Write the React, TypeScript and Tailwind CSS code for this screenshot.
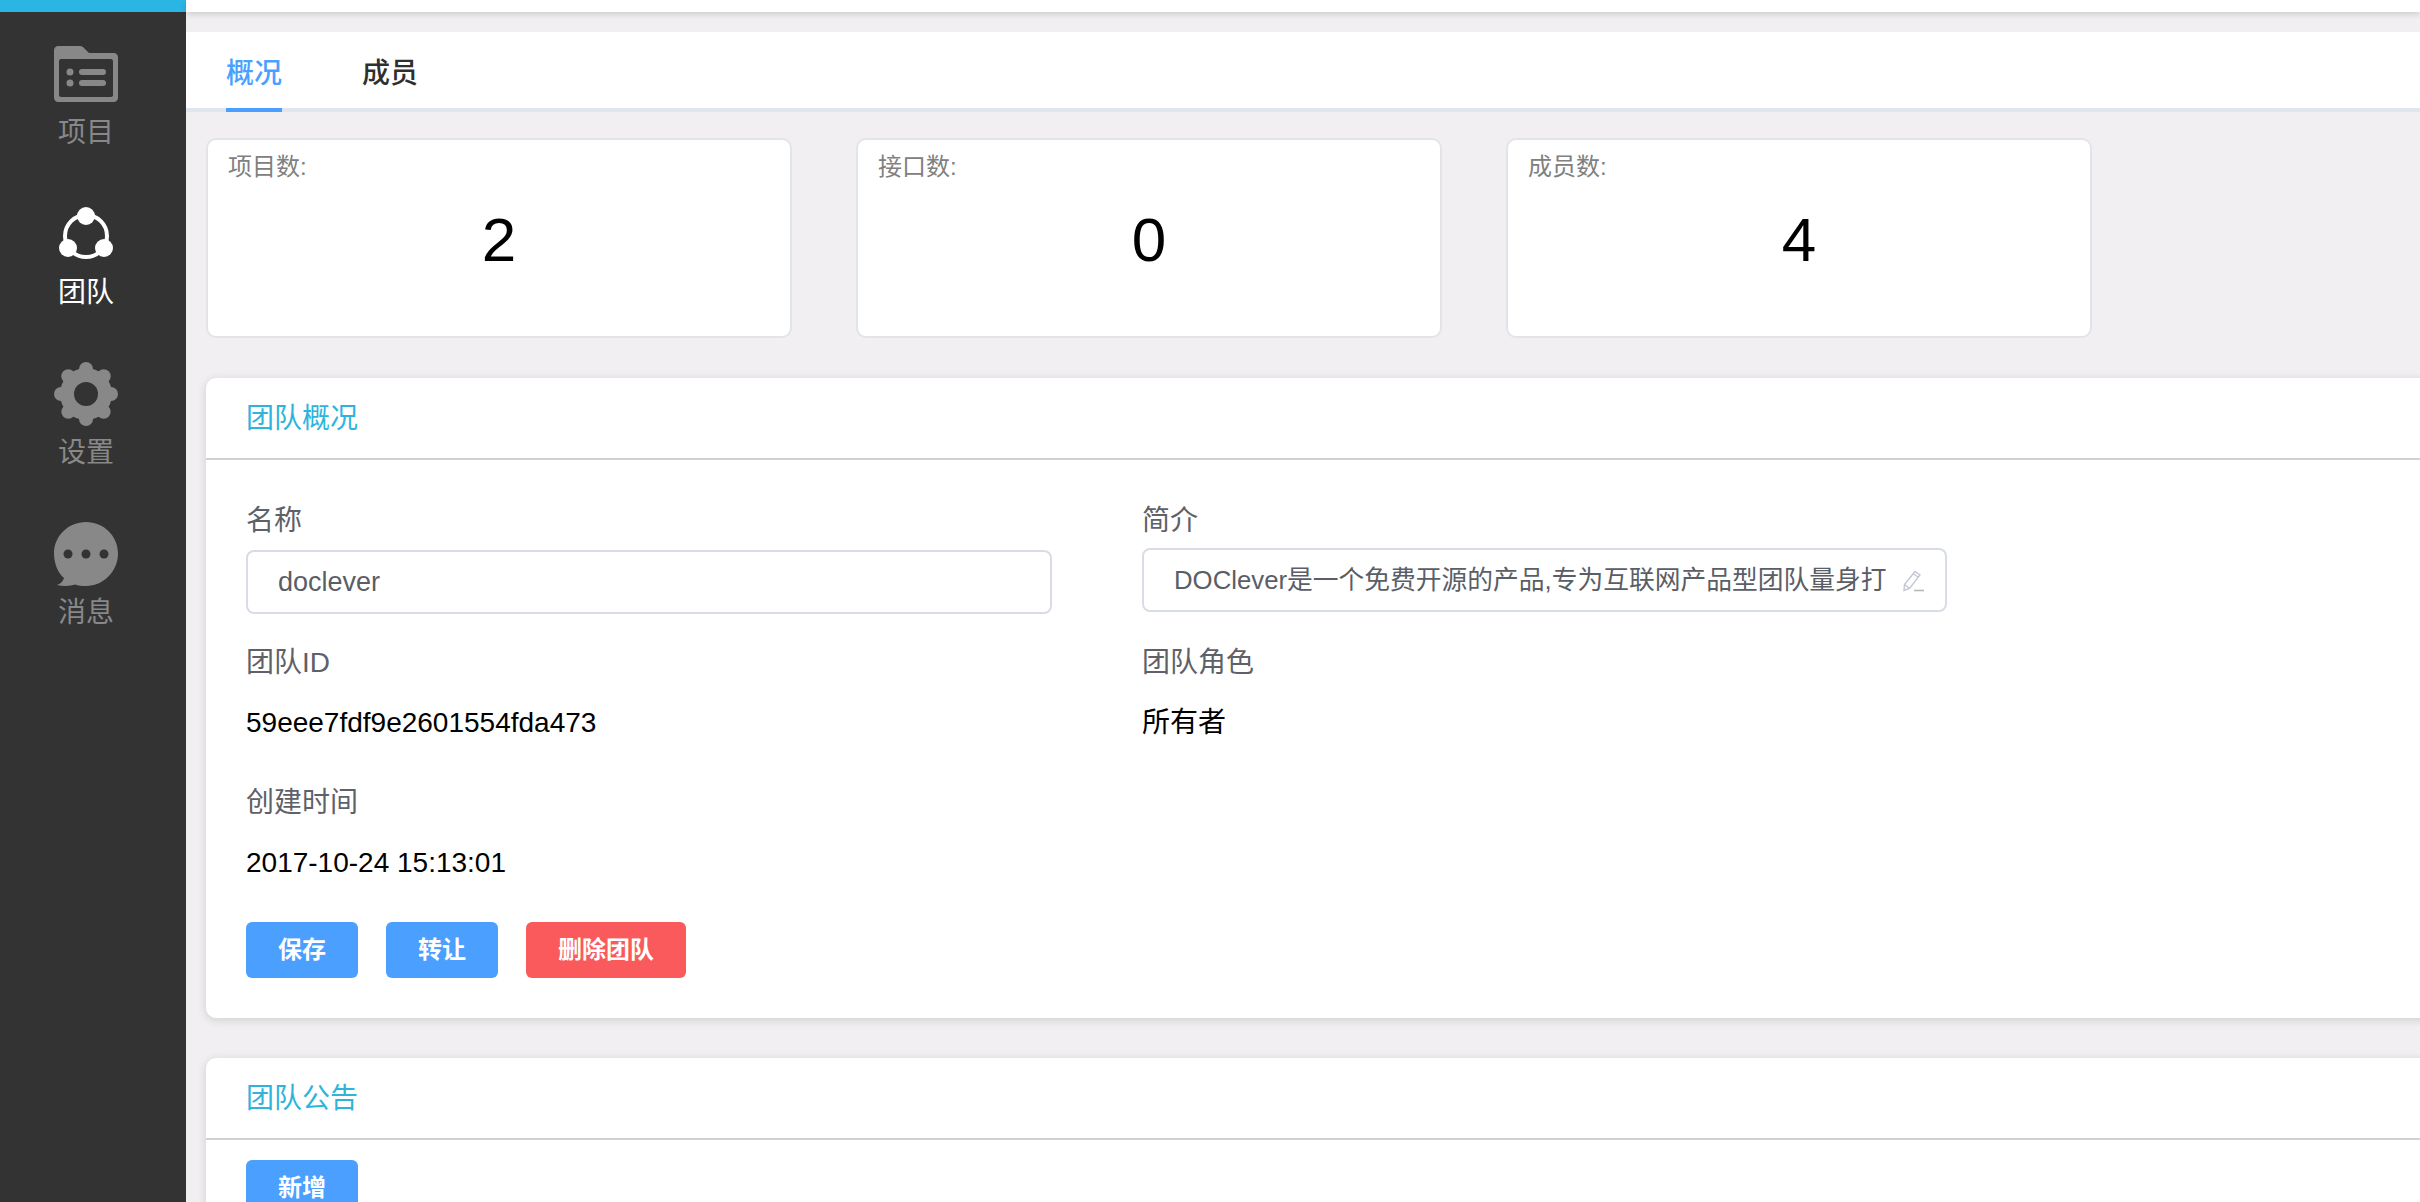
import type { ReactNode } from 'react'

const font = '[font-family:"Liberation_Sans","Noto_Sans_CJK_SC",sans-serif]'

function FolderIcon() {
  return (
    <svg width="64" height="56" viewBox="0 0 64 56">
      <path
        fill="#888888"
        fillRule="evenodd"
        d="M4 0h22c2 0 3 1 4 2l5 5h25c2 0 4 2 4 4v41c0 2-2 4-4 4H4c-2 0-4-2-4-4V4c0-2 2-4 4-4zM7 13c-1 0-2 1-2 2v34c0 1 1 2 2 2h50c1 0 2-1 2-2V15c0-1-1-2-2-2z"
      />
      <circle cx="16" cy="26" r="3.5" fill="#888888" />
      <circle cx="16" cy="37" r="3.5" fill="#888888" />
      <rect x="25" y="23" width="27" height="6" rx="3" fill="#888888" />
      <rect x="25" y="34" width="27" height="6" rx="3" fill="#888888" />
    </svg>
  )
}

function TeamIcon() {
  return (
    <svg width="56" height="54" viewBox="0 0 56 54">
      <circle cx="28" cy="29" r="21" fill="none" stroke="#ffffff" strokeWidth="4" />
      <circle cx="28" cy="9" r="9" fill="#ffffff" />
      <circle cx="10" cy="41" r="9" fill="#ffffff" />
      <circle cx="46" cy="41" r="9" fill="#ffffff" />
    </svg>
  )
}

function GearIcon() {
  const angles = [0, 45, 90, 135, 180, 225, 270, 315]
  return (
    <svg width="64" height="64" viewBox="-32 -32 64 64">
      <circle r="26" fill="#888888" />
      {angles.map((a) => (
        <circle key={a} cx="0" cy="-25" r="7" fill="#888888" transform={`rotate(${a})`} />
      ))}
      <circle r="12" fill="#333333" />
    </svg>
  )
}

function ChatIcon() {
  return (
    <svg width="64" height="64" viewBox="0 0 64 64">
      <path
        fill="#888888"
        d="M32 0c17.7 0 32 14 32 31.500S49.700 64 32 64c-4 0-8-.5-11-1.500-4 1.500-11 2-18 .5 4-1.500 6-3.500 7-7C4 51 0 41.500 0 31.500 0 14 14.300 0 32 0z"
      />
      <circle cx="14" cy="32" r="4.500" fill="#333333" />
      <circle cx="32" cy="32" r="4.500" fill="#333333" />
      <circle cx="50" cy="32" r="4.500" fill="#333333" />
    </svg>
  )
}

function PencilIcon() {
  return (
    <svg className="shrink-0 mt-0.5" width="22" height="22" viewBox="0 0 22 22" fill="none" stroke="#c3c7d3" strokeWidth="1.400">
      <path d="M12 1.500l5 3.500L6.500 18.500 1 20.500l.5-6z" />
      <path d="M10.300 3.800l5 3.500" />
      <path d="M1.500 14.500l5 4" />
      <path d="M11 20.500h10" stroke="#b4b7bd" strokeWidth="1.600" />
    </svg>
  )
}

function NavItem({ icon, label, active }: { icon: ReactNode; label: string; active?: boolean }) {
  return (
    <div className="h-[160px] pt-[30px] pr-[14px] flex flex-col items-center">
      <div className="h-[64px] flex items-center justify-center">{icon}</div>
      <div className={`mt-[9px] text-[28px] leading-[36px] ${active ? 'text-white' : 'text-[#888888]'}`}>{label}</div>
    </div>
  )
}

function StatCard({ label, value }: { label: string; value: string }) {
  return (
    <div className="w-[586px] h-[200px] bg-white border-2 border-[#e3e4e8] rounded-[10px] px-5 pt-2.5">
      <div className="text-2xl leading-[34px] text-[#808080]">{label}</div>
      <div className="mt-[21px] text-center text-[62px] leading-[70px] text-black">{value}</div>
    </div>
  )
}

function SectionCard({ title, children }: { title: string; children: ReactNode }) {
  return (
    <section className="-mr-10 bg-white rounded-[10px] shadow-[0_2px_10px_rgba(0,0,0,0.14)]">
      <div className="h-[82px] pl-10 pt-0.5 flex items-center border-b-2 border-[#d1d1d1] text-[28px] text-[#2eb4dc]">{title}</div>
      {children}
    </section>
  )
}

function Label({ children }: { children: ReactNode }) {
  return <div className="text-[28px] leading-10 text-[#5e6168]">{children}</div>
}

function Value({ children }: { children: ReactNode }) {
  return <div className="text-[28px] leading-10 text-black">{children}</div>
}

function Btn({ children, red }: { children: ReactNode; red?: boolean }) {
  return (
    <button className={`h-14 px-[32px] min-w-[112px] rounded-md text-white text-2xl font-bold ${red ? 'bg-[#fa5a5c]' : 'bg-[#4a9fff]'}`}>
      {children}
    </button>
  )
}

export default function App() {
  return (
    <div className={`h-[1202px] flex overflow-hidden bg-[#f1eff2] ${font}`}>
      <aside className="w-[186px] shrink-0 bg-[#333333]">
        <div className="h-3 bg-[#2ab6e4]" />
        <NavItem icon={<FolderIcon />} label="项目" />
        <NavItem icon={<TeamIcon />} label="团队" active />
        <NavItem icon={<GearIcon />} label="设置" />
        <NavItem icon={<ChatIcon />} label="消息" />
      </aside>

      <main className="flex-1 min-w-0">
        <div className="h-3 bg-white shadow-[0_2px_6px_rgba(0,0,0,0.16)]" />

        <div className="mt-5 h-20 bg-white border-b-4 border-[#e0e6ed] pl-10 flex gap-20">
          <div className="h-20 leading-[84px] border-b-4 border-[#4a9fff] text-[28px] font-medium text-[#4a9fff]">概况</div>
          <div className="h-20 leading-[84px] text-[28px] font-medium text-[#2f2f2f]">成员</div>
        </div>

        <div className="px-5">
          <div className="mt-[26px] flex gap-[64px]">
            <StatCard label="项目数:" value="2" />
            <StatCard label="接口数:" value="0" />
            <StatCard label="成员数:" value="4" />
          </div>

          <div className="mt-10">
            <SectionCard title="团队概况">
              <div className="pt-[41px] pb-10 pl-10">
                <div className="grid grid-cols-[806px_805px] gap-x-[90px]">
                  <div>
                    <Label>名称</Label>
                    <div className="mt-[9px] h-16 border-2 border-[#d8dce5] rounded-lg pl-[30px] flex items-center text-[27px] text-[#5a5e66]">doclever</div>
                  </div>
                  <div>
                    <Label>简介</Label>
                    <div className="mt-[7px] h-16 border-2 border-[#d8dce5] rounded-lg pl-[30px] pr-5 flex items-center justify-between text-[25.75px] text-[#5a5e66]">
                      <span className="whitespace-nowrap overflow-hidden">DOClever是一个免费开源的产品,专为互联网产品型团队量身打</span>
                      <PencilIcon />
                    </div>
                  </div>
                  <div className="mt-[29px]">
                    <Label>团队ID</Label>
                    <div className="mt-5"><Value>59eee7fdf9e2601554fda473</Value></div>
                  </div>
                  <div className="mt-[29px]">
                    <Label>团队角色</Label>
                    <div className="mt-5"><Value>所有者</Value></div>
                  </div>
                  <div className="mt-10">
                    <Label>创建时间</Label>
                    <div className="mt-5"><Value>2017-10-24 15:13:01</Value></div>
                  </div>
                </div>
                <div className="mt-[39px] flex gap-7">
                  <Btn>保存</Btn>
                  <Btn>转让</Btn>
                  <Btn red>删除团队</Btn>
                </div>
              </div>
            </SectionCard>
          </div>

          <div className="mt-10">
            <SectionCard title="团队公告">
              <div className="pt-5 pb-5 pl-10">
                <Btn>新增</Btn>
              </div>
            </SectionCard>
          </div>
        </div>
      </main>
    </div>
  )
}
